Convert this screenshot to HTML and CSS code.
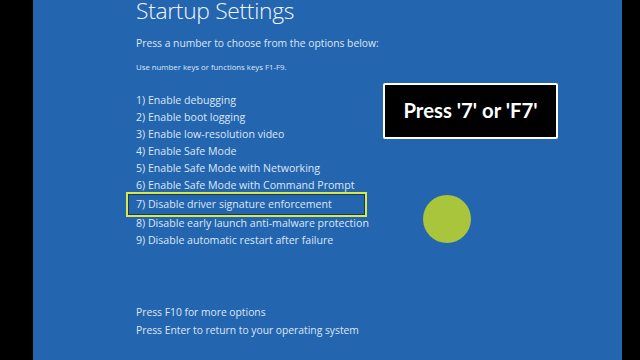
FILE: index.html
```html
<!DOCTYPE html>
<html lang="en">
<head>
    <meta charset="UTF-8">
    <meta name="viewport" content="width=device-width, initial-scale=1.0">
    <title>Startup Settings</title>
    <link rel="stylesheet" href="styles.css">
</head>
<body>
<section class="screen">
    <div class="content">
        <h1 class="title">Startup Settings</h1>
        <p class="intro">Press a number to choose from the options below:</p>
        <p class="hint">Use number keys or functions keys F1-F9.</p>
        <ul class="options">
            <li>1) Enable debugging</li>
            <li>2) Enable boot logging</li>
            <li>3) Enable low-resolution video</li>
            <li>4) Enable Safe Mode</li>
            <li>5) Enable Safe Mode with Networking</li>
            <li>6) Enable Safe Mode with Command Prompt</li>
            <li class="picked">7) Disable driver signature enforcement</li>
            <li>8) Disable early launch anti-malware protection</li>
            <li>9) Disable automatic restart after failure</li>
        </ul>
        <div class="footer">
            <p>Press F10 for more options</p>
            <p>Press Enter to return to your operating system</p>
        </div>
    </div>
    <div class="callout">Press '7' or 'F7'</div>
    <div class="pointer"></div>
</section>
</body>
</html>
```

FILE: styles.css
```css
*{
    margin: 0;
    padding: 0;
}
html, body{
    height: 100%;
}
body{
    background: #000;
    font-family: "Open Sans", "Noto Sans", sans-serif;
    overflow: hidden;
}
.screen{
    position: relative;
    margin-left: 33px;
    width: 589px;
    height: 360px;
    background: #2465b0;
    color: #dde7f4;
}
.content{
    display: flex;
    flex-direction: column;
    height: 100%;
    padding-left: 103px;
    box-sizing: border-box;
}
.title{
    font-weight: 300;
    font-size: 22.8px;
    line-height: 22px;
    color: #f2f6fb;
    letter-spacing: -0.3px;
}
.intro{
    font-size: 10.3px;
    margin-top: 14px;
    line-height: 14px;
}
.hint{
    font-size: 7.8px;
    margin-top: 12px;
    line-height: 10px;
}
.options{
    list-style: none;
    margin-top: 20px;
    font-size: 10.6px;
}
.options li{
    line-height: 17.1px;
}
.options .picked{
    margin-left: -10px;
    padding-left: 8px;
    width: 229px;
    border: 2px solid #d9e94b;
    box-shadow: inset 0 0 0 1px #163a5e;
    line-height: 21px;
    margin-top: -3px;
    margin-bottom: -2px;
}
.footer{
    margin-top: auto;
    margin-bottom: 21px;
    font-size: 10.3px;
    line-height: 18px;
}
.callout{
    position: absolute;
    left: 350px;
    top: 83px;
    width: 171px;
    height: 50px;
    background: #000;
    border: 2px solid #fff;
    border-radius: 2px;
    color: #fff;
    font-family: Lato, "Open Sans", sans-serif;
    font-weight: bold;
    font-size: 20.3px;
    display: flex;
    align-items: center;
    justify-content: center;
    padding-bottom: 2px;
    box-sizing: content-box;
}
.pointer{
    position: absolute;
    left: 390px;
    top: 195px;
    width: 48px;
    height: 48px;
    border-radius: 50%;
    background: #a9c53b;
}
```
